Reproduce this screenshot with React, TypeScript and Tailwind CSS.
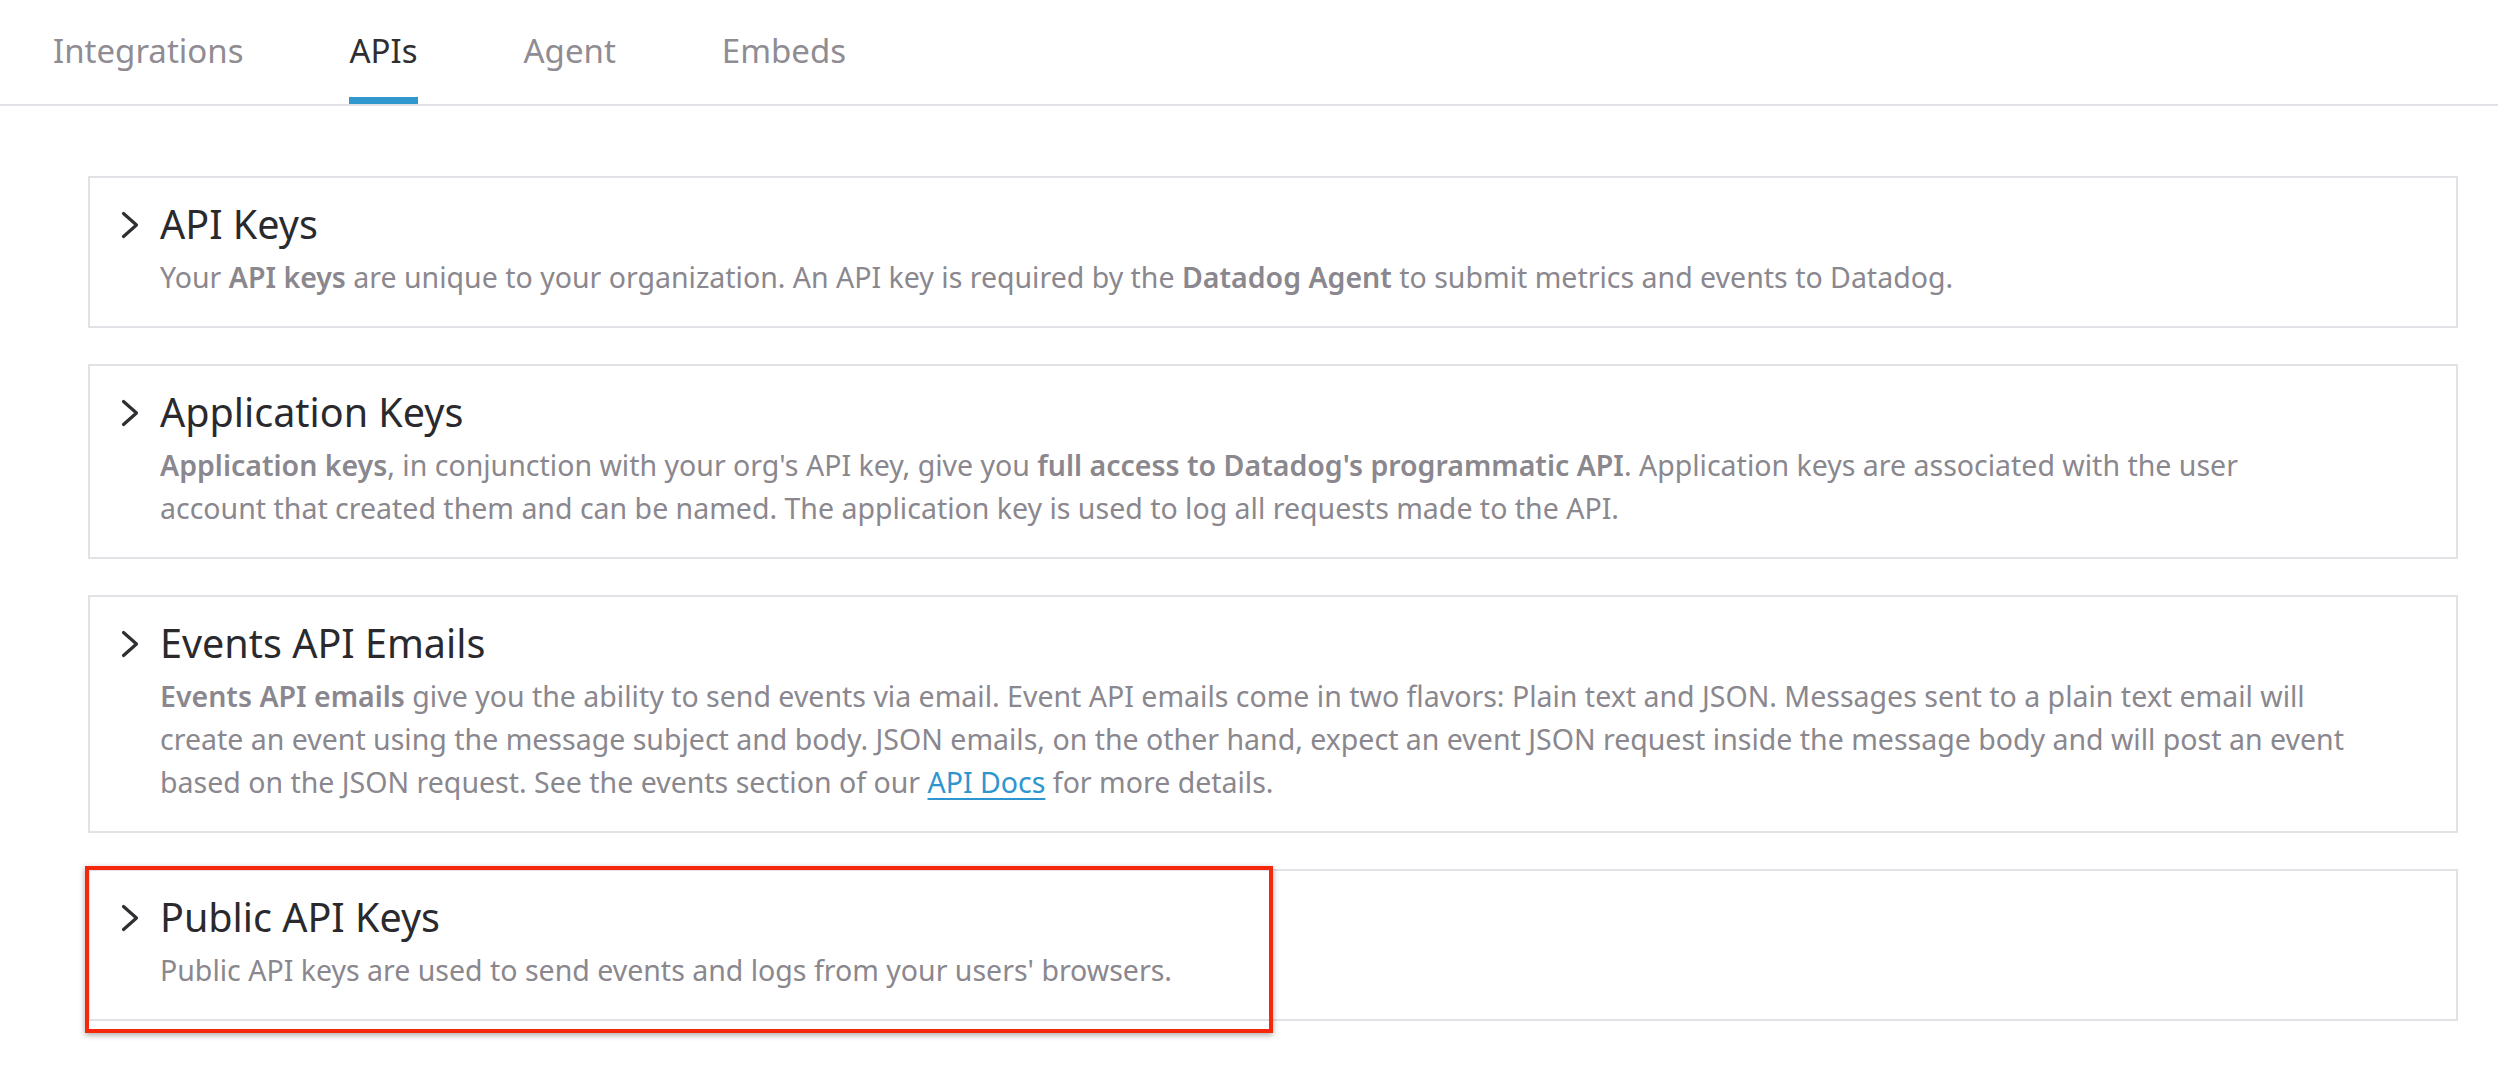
import React from "react";

const tabs = ["Integrations", "APIs", "Agent", "Embeds"];

function Chevron() {
  return (
    <svg width="18" height="28" viewBox="0 0 18 28" fill="none" className="shrink-0">
      <polyline
        points="2.5,2.5 15.5,14 2.5,25.5"
        stroke="#2f2f33"
        strokeWidth="3.2"
        strokeLinecap="round"
        strokeLinejoin="round"
      />
    </svg>
  );
}

function Card({
  title,
  children,
  highlight,
}: {
  title: string;
  children: React.ReactNode;
  highlight?: boolean;
}) {
  return (
    <div className="relative border-2 border-[#e1e1e6] bg-white pl-[31px] pr-[100px] pt-[24px] pb-[27px]">
      <div className="flex items-center gap-[21px]">
        <Chevron />
        <h2 className="text-[39.5px] leading-[45px] text-[#2a2a2e]">{title}</h2>
      </div>
      <p className="mt-[9px] pl-[39px] text-[28.5px] leading-[43px] text-[#8a878e]">
        {children}
      </p>
      {highlight && (
        <div className="pointer-events-none absolute -left-[5px] -top-[5px] h-[167px] w-[1188px] border-4 border-[#f5280c] shadow-[0_2px_6px_rgba(0,0,0,0.35)]" />
      )}
    </div>
  );
}

export default function App() {
  return (
    <div
      className="min-h-screen bg-white"
      style={{ fontFamily: '"Noto Sans", "Open Sans", sans-serif' }}
    >
      <nav className="flex border-b-2 border-[#e1e1e6]">
        {tabs.map((tab) => {
          const active = tab === "APIs";
          return (
            <div key={tab} className="px-[53px]">
              <span
                className={
                  active
                    ? "block border-b-[7px] border-[#3198cf] pt-[29px] pb-[24px] text-[33px] leading-[44px] text-[#2f2f33]"
                    : "block border-b-[7px] border-transparent pt-[29px] pb-[24px] text-[33px] leading-[44px] text-[#8f8c93]"
                }
              >
                {tab}
              </span>
            </div>
          );
        })}
      </nav>

      <div className="flex flex-col gap-[36px] pl-[88px] pr-[40px] pt-[70px] pb-[40px]">
        <Card title="API Keys">
          Your <b className="font-semibold">API keys</b> are unique to your organization. An API key
          is required by the <b className="font-semibold">Datadog Agent</b> to submit metrics and
          events to Datadog.
        </Card>

        <Card title="Application Keys">
          <b className="font-semibold">Application keys</b>, in conjunction with your org's API key,
          give you <b className="font-semibold">full access to Datadog's programmatic API</b>.
          Application keys are associated with the user
          <br />
          account that created them and can be named. The application key is used to log all
          requests made to the API.
        </Card>

        <Card title="Events API Emails">
          <b className="font-semibold">Events API emails</b> give you the ability to send events via
          email. Event API emails come in two flavors: Plain text and JSON. Messages sent to a plain
          text email will
          <br />
          create an event using the message subject and body. JSON emails, on the other hand,
          expect an event JSON request inside the message body and will post an event
          <br />
          based on the JSON request. See the events section of our{" "}
          <a href="#" className="text-[#2e95cf] underline underline-offset-[5px]">
            API Docs
          </a>{" "}
          for more details.
        </Card>

        <Card title="Public API Keys" highlight>
          Public API keys are used to send events and logs from your users' browsers.
        </Card>
      </div>
    </div>
  );
}
